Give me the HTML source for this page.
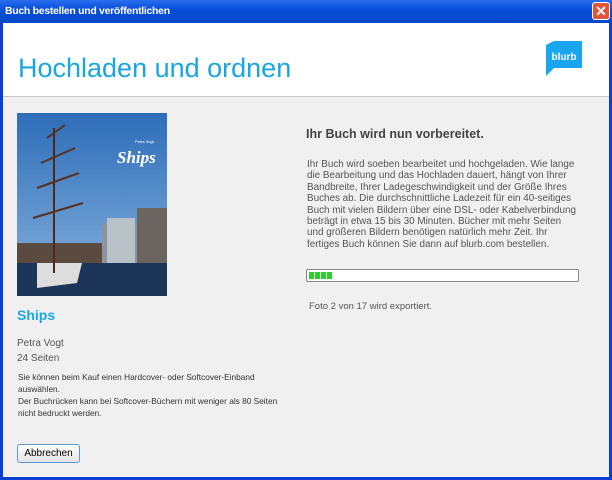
<!DOCTYPE html>
<html><head><meta charset="utf-8"><style>
*{margin:0;padding:0;box-sizing:border-box}
body{width:612px;height:480px;overflow:hidden;font-family:"Liberation Sans",sans-serif;background:#0a3fd0;position:relative}
.tb{position:absolute;left:0;top:0;width:612px;height:23px;background:linear-gradient(#2a6ef0,#0850d8 40%,#0548c8);}
.tb span{position:absolute;left:5px;top:5px;color:#fff;font-weight:bold;font-size:10.5px;letter-spacing:-0.3px}
.x{position:absolute;left:592px;top:2px;width:18px;height:18px;background:#e0553a;border:1px solid #fff;border-radius:3px;color:#fff;font-size:14px;font-weight:bold;text-align:center;line-height:16px}
.win{position:absolute;left:3px;top:23px;width:606px;height:454px;background:#f0f0f0}
.hd{position:absolute;left:0;top:0;width:606px;height:74px;background:#fff;border-bottom:1px solid #c8c8c8}
.hd h1{position:absolute;left:15px;top:30px;font-weight:normal;font-size:27px;color:#1aa6e0}
.ships{position:absolute;left:17px;top:307px;font-size:14px;font-weight:bold;color:#1aa6e0}
.g{position:absolute;color:#555;font-size:10px}
.s{position:absolute;color:#333;font-size:8.3px;line-height:11.5px;white-space:nowrap}
.btn{position:absolute;left:17px;top:444px;width:63px;height:19px;border:1px solid #5a9ad0;border-radius:3px;background:linear-gradient(#fff,#e4e4e4);font-size:10px;text-align:center;line-height:17px;color:#000}
.h2{position:absolute;left:306px;top:127px;font-size:12.5px;font-weight:bold;color:#444}
.p{position:absolute;left:307px;top:159px;font-size:9.9px;line-height:11.4px;color:#555;white-space:nowrap}
.bar{position:absolute;left:306px;top:269px;width:273px;height:13px;border:1px solid #888;border-radius:2px;background:#fff}
.bar i{position:absolute;top:2px;width:5px;height:7px;background:#2bd02b}
</style></head><body>
<div class="tb"><span>Buch bestellen und veröffentlichen</span></div>
<div class="x">✕</div>
<div class="win">
<div class="hd"><h1>Hochladen und ordnen</h1></div>
</div>
<svg width="40" height="40" viewBox="0 0 40 40" style="position:absolute;left:544px;top:41px"><path d="M2 4 L10 0 L38 0 L38 27 L10 27 L2 35 Z" fill="#1aa6ee"/><text x="20" y="19" font-family="Liberation Sans" font-size="10" font-weight="bold" fill="#fff" text-anchor="middle">blurb</text></svg>
<svg style="position:absolute;left:17px;top:113px" width="150" height="183" viewBox="0 0 150 183">
<defs><linearGradient id="sk" x1="0" y1="0" x2="0" y2="1"><stop offset="0" stop-color="#2d6db8"/><stop offset="1" stop-color="#8ab4e0"/></linearGradient></defs>
<rect width="150" height="183" fill="url(#sk)"/>
<rect x="85" y="110" width="65" height="45" fill="#8a95a0"/>
<rect x="120" y="95" width="30" height="60" fill="#6a6560"/>
<rect x="90" y="105" width="28" height="50" fill="#b8c0c8"/>
<rect x="0" y="130" width="85" height="30" fill="#5a4a40"/>
<rect x="0" y="150" width="150" height="33" fill="#1c3558"/>
<path d="M20 175 L60 170 L65 150 L20 150 Z" fill="#ddd"/>
<line x1="37" y1="15" x2="37" y2="160" stroke="#4a2a1a" stroke-width="2"/>
<g stroke="#5a3020" stroke-width="2"><line x1="30" y1="25" x2="48" y2="12"/><line x1="24" y1="50" x2="58" y2="35"/><line x1="20" y1="75" x2="62" y2="60"/><line x1="16" y1="105" x2="66" y2="90"/></g>
<text x="100" y="50" font-family="Liberation Serif" font-style="italic" font-weight="bold" font-size="17" fill="#fff">Ships</text>
<text x="118" y="30" font-family="Liberation Sans" font-size="4" fill="#fff">Petra Vogt</text>
</svg>
<div class="ships">Ships</div>
<div class="g" style="left:17px;top:338px">Petra Vogt</div>
<div class="g" style="left:17px;top:353px">24 Seiten</div>
<div class="s" style="left:18px;top:372px">Sie können beim Kauf einen Hardcover- oder Softcover-Einband<br>auswählen.</div>
<div class="s" style="left:18px;top:396px">Der Buchrücken kann bei Softcover-Büchern mit weniger als 80 Seiten<br>nicht bedruckt werden.</div>
<div class="btn">Abbrechen</div>
<div class="h2">Ihr Buch wird nun vorbereitet.</div>
<div class="p">Ihr Buch wird soeben bearbeitet und hochgeladen. Wie lange<br>die Bearbeitung und das Hochladen dauert, hängt von Ihrer<br>Bandbreite, Ihrer Ladegeschwindigkeit und der Größe Ihres<br>Buches ab. Die durchschnittliche Ladezeit für ein 40-seitiges<br>Buch mit vielen Bildern über eine DSL- oder Kabelverbindung<br>beträgt in etwa 15 bis 30 Minuten. Bücher mit mehr Seiten<br>und größeren Bildern benötigen natürlich mehr Zeit. Ihr<br>fertiges Buch können Sie dann auf blurb.com bestellen.</div>
<div class="bar"><i style="left:2px"></i><i style="left:8px"></i><i style="left:14px"></i><i style="left:20px"></i></div>
<div class="g" style="left:309px;top:301px;font-size:9.5px">Foto 2 von 17 wird exportiert.</div>
</body></html>
